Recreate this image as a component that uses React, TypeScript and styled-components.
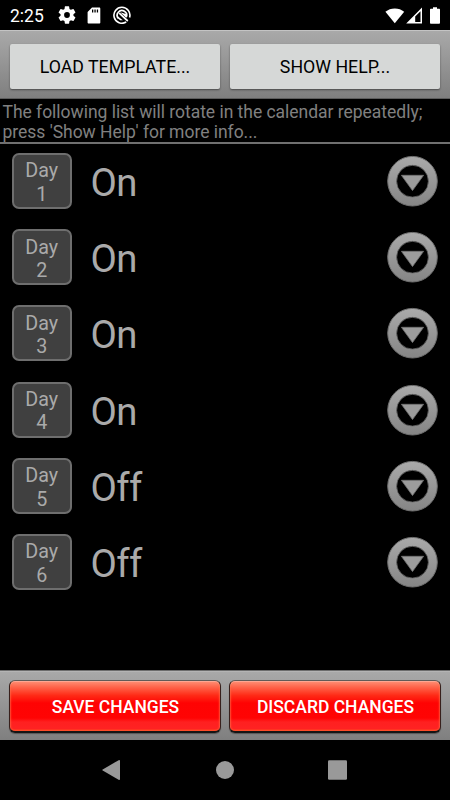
import React from "react";
import styled, { createGlobalStyle, css } from "styled-components";

const GlobalStyle = createGlobalStyle`
  html, body { margin: 0; padding: 0; background: #000; }
  * { box-sizing: border-box; }
`;

const Screen = styled.div`
  width: 450px;
  height: 800px;
  overflow: hidden;
  display: flex;
  flex-direction: column;
  background: #000;
  font-family: Roboto, sans-serif;
`;

const StatusBar = styled.header`
  height: 30px;
  flex: none;
  display: flex;
  align-items: center;
  padding: 0 10px 0 10px;
  color: #fff;
`;

const Clock = styled.span`
  width: 48px;
  font-size: 17.5px;
  line-height: 30px;
  padding-top: 1px;
`;

const StatusIcons = styled.div<{ $end?: boolean }>`
  display: flex;
  align-items: center;
  ${(p) => p.$end && css`margin-left: auto;`}
  svg { display: block; }
`;

const barSurface = css`
  background: linear-gradient(#a9a9a9, #7f7f7f);
  display: flex;
  gap: 10px;
  flex: none;
`;

const TopBar = styled.div`
  ${barSurface}
  height: 69px;
  padding: 13px 10px 0;
  border-top: 1px solid #c4c4c4;
  border-bottom: 1px solid #5c5c5c;
`;

const BottomBar = styled.div`
  ${barSurface}
  height: 70px;
  padding: 9px 9px 0;
  gap: 8px;
  border-top: 1px solid #6c6c6c;
  box-shadow: inset 0 1px #b4b4b4;
  margin-top: auto;
`;

const buttonText = css`
  display: flex;
  align-items: center;
  justify-content: center;
  flex: 1;
  border: 0;
  padding: 0;
  font-family: inherit;
  font-weight: 500;
  white-space: nowrap;
`;

const LightButton = styled.button`
  ${buttonText}
  height: 45px;
  padding-top: 1px;
  background: #d6d8d7;
  border-radius: 2px;
  color: #000;
  font-weight: 400;
  font-size: 17.75px;
  box-shadow: 0 1px 2px rgba(0, 0, 0, 0.45);
`;

const RedButton = styled.button`
  ${buttonText}
  height: 53px;
  padding: 2px 0 0 1px;
  color: #fff;
  font-size: 17.5px;
  border: 1px solid;
  border-color: #625b58 #38201c #151515;
  border-bottom-width: 2px;
  border-radius: 6px;
  background: linear-gradient(#ff9277 0, #ff654b 12%, #ff2a16 29%, #ff0303 44%, #ff0404 74%, #ff2020 82%, #ff2222 95%, #ff4a20 100%);
  box-shadow: inset 0 1px 1px #ffac98, inset 1px 0 2px rgba(255, 100, 60, 0.65),
    inset -1px 0 2px rgba(255, 100, 60, 0.65), 0 1px 1px rgba(0, 0, 0, 0.35);
`;

const Intro = styled.p`
  margin: 0;
  height: 45px;
  flex: none;
  padding: 3px 0 0 2.5px;
  color: #808080;
  font-size: 17.5px;
  letter-spacing: -0.025px;
  line-height: 20px;
  white-space: nowrap;
  border-bottom: 2px solid #707070;
`;

const DayList = styled.ul`
  list-style: none;
  margin: 0;
  padding: 0;
`;

const DayRow = styled.li`
  height: 76.2px;
  padding: 9px 12px 0;
  display: flex;
  align-items: flex-start;
`;

const DayBadge = styled.div`
  width: 59.5px;
  height: 56px;
  border: 2px solid #6e6e6e;
  border-radius: 7px;
  background: #404040;
  color: #aaa;
  font-size: 19.7px;
  line-height: 23.5px;
  text-align: center;
  padding-top: 4.4px;
  display: flex;
  flex-direction: column;
`;

const DayState = styled.span`
  flex: 1;
  padding-left: 19px;
  color: #aaa;
  font-size: 38.3px;
  letter-spacing: -0.6px;
  line-height: 60px;
`;

const ExpandButton = styled.button`
  border: 0;
  padding: 2px 0 0;
  background: none;
  svg { display: block; }
`;

const NavBar = styled.nav`
  height: 60px;
  flex: none;
  display: flex;
  justify-content: center;
  align-items: center;
  svg { display: block; }
`;

const GearIcon = () => (
  <svg width="18" height="18" viewBox="2 2 20 20" fill="#fff">
    <path d="M19.14 12.94c.04-.3.06-.61.06-.94s-.02-.64-.07-.94l2.03-1.58a.5.5 0 0 0 .12-.61l-1.92-3.32a.49.49 0 0 0-.59-.22l-2.39.96c-.5-.38-1.03-.7-1.62-.94l-.36-2.54A.48.48 0 0 0 13.92 2.4h-3.84c-.24 0-.43.17-.47.41l-.36 2.54c-.59.24-1.13.57-1.62.94l-2.39-.96a.49.49 0 0 0-.59.22L2.74 8.87a.48.48 0 0 0 .12.61l2.03 1.58c-.05.3-.09.63-.09.94s.02.64.07.94l-2.03 1.58a.5.5 0 0 0-.12.61l1.92 3.32c.12.22.37.29.59.22l2.39-.96c.5.38 1.03.7 1.62.94l.36 2.54c.05.24.24.41.48.41h3.84c.24 0 .44-.17.47-.41l.36-2.54c.59-.24 1.13-.56 1.62-.94l2.39.96c.22.08.47 0 .59-.22l1.92-3.32a.48.48 0 0 0-.12-.61zM12 15.2a3.2 3.2 0 1 1 0-6.4 3.2 3.2 0 0 1 0 6.4z" />
  </svg>
);

const CardIcon = () => (
  <svg width="14" height="17" viewBox="0 0 14 17">
    <path fill="#fff" fillRule="evenodd" d="M5 .5h7.2c.7 0 1.1.5 1.1 1.1v13.8c0 .6-.4 1.1-1.1 1.1H1.7c-.6 0-1.1-.5-1.1-1.1V5zM5 2.4v3h1.3v-3zm2.4 0v3h1.3v-3zm2.4 0v3h1.3v-3z" />
  </svg>
);

const DebugIcon = () => (
  <svg width="18" height="18" viewBox="0 0 18 18" fill="none" stroke="#fff">
    <path d="M13.2 16A8 8 0 1 1 16.6 11.5" strokeWidth="1.6" />
    <path d="M5.4 12.4A4.7 4.7 0 1 1 13.2 11.2" strokeWidth="1.7" />
    <path d="M7.2 6.2L13.6 8.2 13.2 11.8z" fill="#fff" stroke="none" />
    <path d="M6.2 7.2L14.8 15" strokeWidth="1.7" />
    <path d="M5 10.4L9.8 14.2H7.2L5 12.4z" fill="#fff" stroke="none" />
  </svg>
);

const WifiIcon = () => (
  <svg width="20" height="17" viewBox="0 0 20 17">
    <path fill="#fff" d="M9.8 16.2L.4 4.7C3 2.6 6.2 1.4 9.8 1.4s6.8 1.2 9.4 3.3z" />
  </svg>
);

const SignalIcon = () => (
  <svg width="17" height="17" viewBox="0 0 17 17">
    <path fill="#fff" fillRule="evenodd" d="M.2 16.5L16 .5v16zM9.2 9.4v5.7h5.3V4.2z" />
  </svg>
);

const BatteryIcon = () => (
  <svg width="10" height="17" viewBox="0 0 10 17">
    <path fill="#fff" d="M3 .2h4v1.6h2c.6 0 1 .4 1 1v13c0 .5-.4 1-1 1H1c-.6 0-1-.5-1-1v-13c0-.6.4-1 1-1h2z" />
  </svg>
);

const ArrowDisc = ({ id }: { id: number }) => (
  <svg width="51" height="52" viewBox="0 0 51 52">
    <defs>
      <linearGradient id={`ring-${id}`} x1="0" y1="0" x2="0" y2="1">
        <stop offset="0" stopColor="#aaaaaa" />
        <stop offset="1" stopColor="#858585" />
      </linearGradient>
    </defs>
    <circle cx="25.5" cy="26.2" r="24.8" fill={`url(#ring-${id})`} stroke="#707070" />
    <circle cx="25.5" cy="26.2" r="15.9" fill="#000" stroke="#6a6a6a" strokeWidth=".8" />
    <path d="M14.4 20.3h22.2L25.5 35.6z" fill="#9c9c9c" stroke="#747474" strokeWidth=".8" />
  </svg>
);

const Gap = styled.span<{ $w: number }>`
  width: ${(p) => p.$w}px;
`;

const days = ["On", "On", "On", "On", "Off", "Off"];

export default function App() {
  return (
    <Screen>
      <GlobalStyle />
      <StatusBar>
        <Clock>2:25</Clock>
        <StatusIcons>
          <GearIcon />
          <Gap $w={11} />
          <CardIcon />
          <Gap $w={12} />
          <DebugIcon />
        </StatusIcons>
        <StatusIcons $end>
          <WifiIcon />
          <Gap $w={1} />
          <SignalIcon />
          <Gap $w={7} />
          <BatteryIcon />
        </StatusIcons>
      </StatusBar>
      <TopBar>
        <LightButton>LOAD TEMPLATE...</LightButton>
        <LightButton>SHOW HELP...</LightButton>
      </TopBar>
      <Intro>
        The following list will rotate in the calendar repeatedly;
        <br />
        press 'Show Help' for more info...
      </Intro>
      <DayList>
        {days.map((state, i) => (
          <DayRow key={i}>
            <DayBadge>
              <span>Day</span>
              <span>{i + 1}</span>
            </DayBadge>
            <DayState>{state}</DayState>
            <ExpandButton aria-label={`Change day ${i + 1}`}>
              <ArrowDisc id={i} />
            </ExpandButton>
          </DayRow>
        ))}
      </DayList>
      <BottomBar>
        <RedButton>SAVE CHANGES</RedButton>
        <RedButton>DISCARD CHANGES</RedButton>
      </BottomBar>
      <NavBar>
        <svg width="250" height="24" viewBox="0 0 250 24" fill="#999">
          <path d="M2.7 11.4L18.6 2.2Q20 1.6 20 3v18q0 1.4-1.4.8L2.7 12.6Q1.8 12 2.7 11.4z" />
          <circle cx="125" cy="12" r="9" />
          <rect x="228" y="2.2" width="19" height="19.5" rx="1.2" />
        </svg>
      </NavBar>
    </Screen>
  );
}
